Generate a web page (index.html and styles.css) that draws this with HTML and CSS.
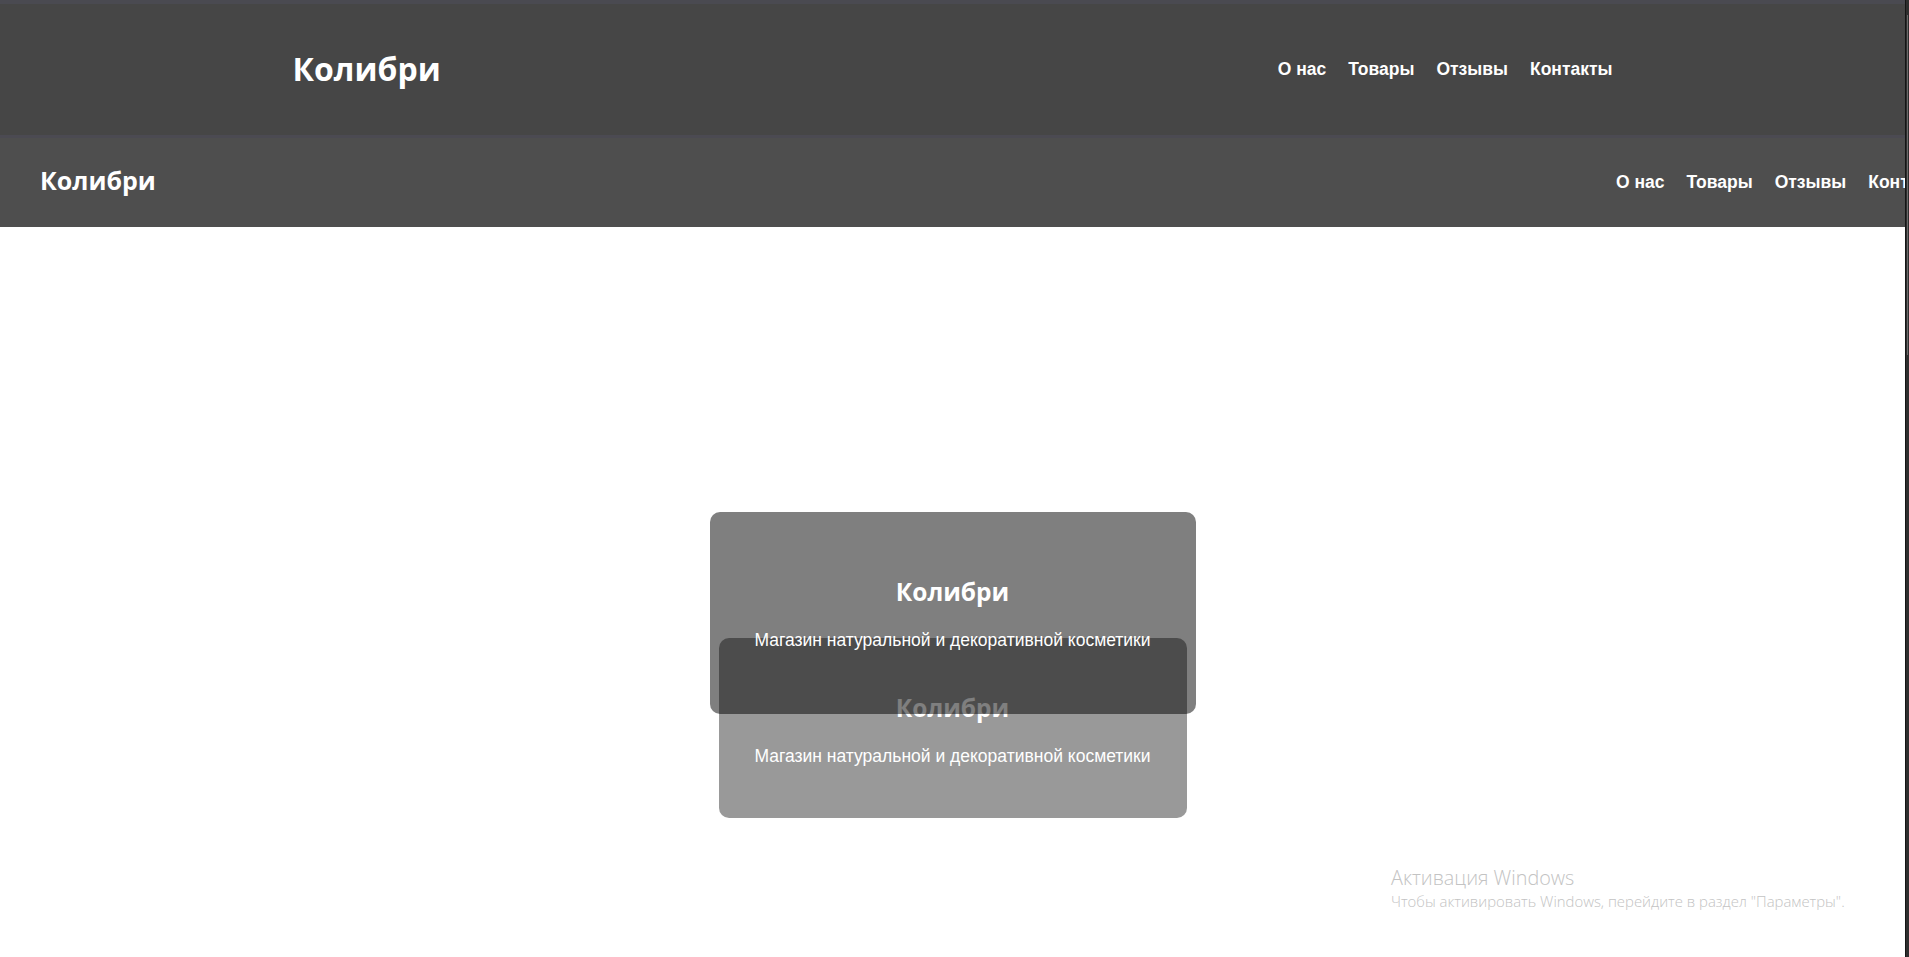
FILE: index.html
```html
<!DOCTYPE html>
<html lang="ru">
<head>
<meta charset="utf-8">
<title>Колибри</title>
<link rel="stylesheet" href="styles.css">
</head>
<body>
<div class="window">
  <div class="page">
    <header class="header-main">
      <div class="container">
        <div class="logo logo-big">Колибри</div>
        <nav class="nav nav-big">
          <a href="#">О нас</a>
          <a href="#">Товары</a>
          <a href="#">Отзывы</a>
          <a href="#">Контакты</a>
        </nav>
      </div>
    </header>
    <header class="header-sticky">
      <div class="sticky-inner">
        <div class="logo logo-small">Колибри</div>
        <nav class="nav nav-small">
          <a href="#">О нас</a>
          <a href="#">Товары</a>
          <a href="#">Отзывы</a>
          <a href="#">Контакты</a>
        </nav>
      </div>
    </header>
    <main class="hero">
      <div class="card card-front">
        <h1 class="card-title">Колибри</h1>
        <p class="card-text">Магазин натуральной и декоративной косметики</p>
      </div>
      <div class="card card-back">
        <h1 class="card-title">Колибри</h1>
        <p class="card-text">Магазин натуральной и декоративной косметики</p>
      </div>
    </main>
    <div class="activation">
      <div class="act-title">Активация Windows</div>
      <div class="act-text">Чтобы активировать Windows, перейдите в раздел "Параметры".</div>
    </div>
  </div>
  <div class="scrollbar"><div class="thumb"></div></div>
</div>
</body>
</html>
```
FILE: styles.css
```css
* { box-sizing: border-box; }
html, body { margin: 0; padding: 0; height: 100%; }
body { background: #fff; overflow: hidden; font-family: "Liberation Sans", Arial, sans-serif; }

.window { display: flex; height: 957px; }
.page { flex: 1; position: relative; overflow: hidden; background: #fff; }
.scrollbar { width: 4px; background: #2e2e2e; border-left: 1px solid #151515; position: relative; }
.thumb { position: absolute; left: 1px; top: 15px; width: 1px; height: 340px; background: #6a6a6a; }

.header-main { background: #464646; border-top: 4px solid #4a4a51; height: 135px; }
.container { width: 1320px; margin: 0 auto; height: 100%; display: flex; align-items: center; justify-content: space-between; }

.logo { color: #fff; font-family: "Open Sans", sans-serif; font-weight: 700; }
.logo-big { font-size: 32px; line-height: 1; padding-bottom: 1px; }
.logo-small { font-size: 25px; line-height: 1; padding-bottom: 4px; }

.nav { display: flex; gap: 22px; }
.nav a { color: #fff; text-decoration: none; font-family: "Liberation Sans", Arial, sans-serif; font-weight: 700; font-size: 17.5px; }

.header-sticky { background: #4e4e4e; border-top: 3px solid #4b4a52; height: 92px; overflow: hidden; }
.sticky-inner { width: 2000px; height: 100%; display: grid; grid-template-columns: 1576px auto; align-items: center; padding-left: 40px; }

.hero { padding-top: 285px; display: flex; flex-direction: column; align-items: center; }
.card { display: flex; flex-direction: column; align-items: center; border-radius: 10px; color: #fff; }
.card-front { width: 486px; height: 202px; background: rgba(0,0,0,0.5); position: relative; z-index: 1; padding-top: 68px; }
.card-back { width: 468px; height: 180px; background: rgba(0,0,0,0.4); margin-top: -76px; padding-top: 58px; }
.card-title { margin: 0; font-family: "Open Sans", sans-serif; font-weight: 700; font-size: 24.5px; line-height: 1; }
.card-text { margin: 25px 0 0; font-size: 17.5px; line-height: 1.2; }

.activation { position: absolute; left: 1391px; top: 865px; color: #c3c3c3; font-family: "Open Sans", "Noto Sans", sans-serif; font-weight: 300; }
.act-title { font-size: 19.8px; line-height: 26px; }
.act-text { font-size: 14.9px; line-height: 20px; }
```
